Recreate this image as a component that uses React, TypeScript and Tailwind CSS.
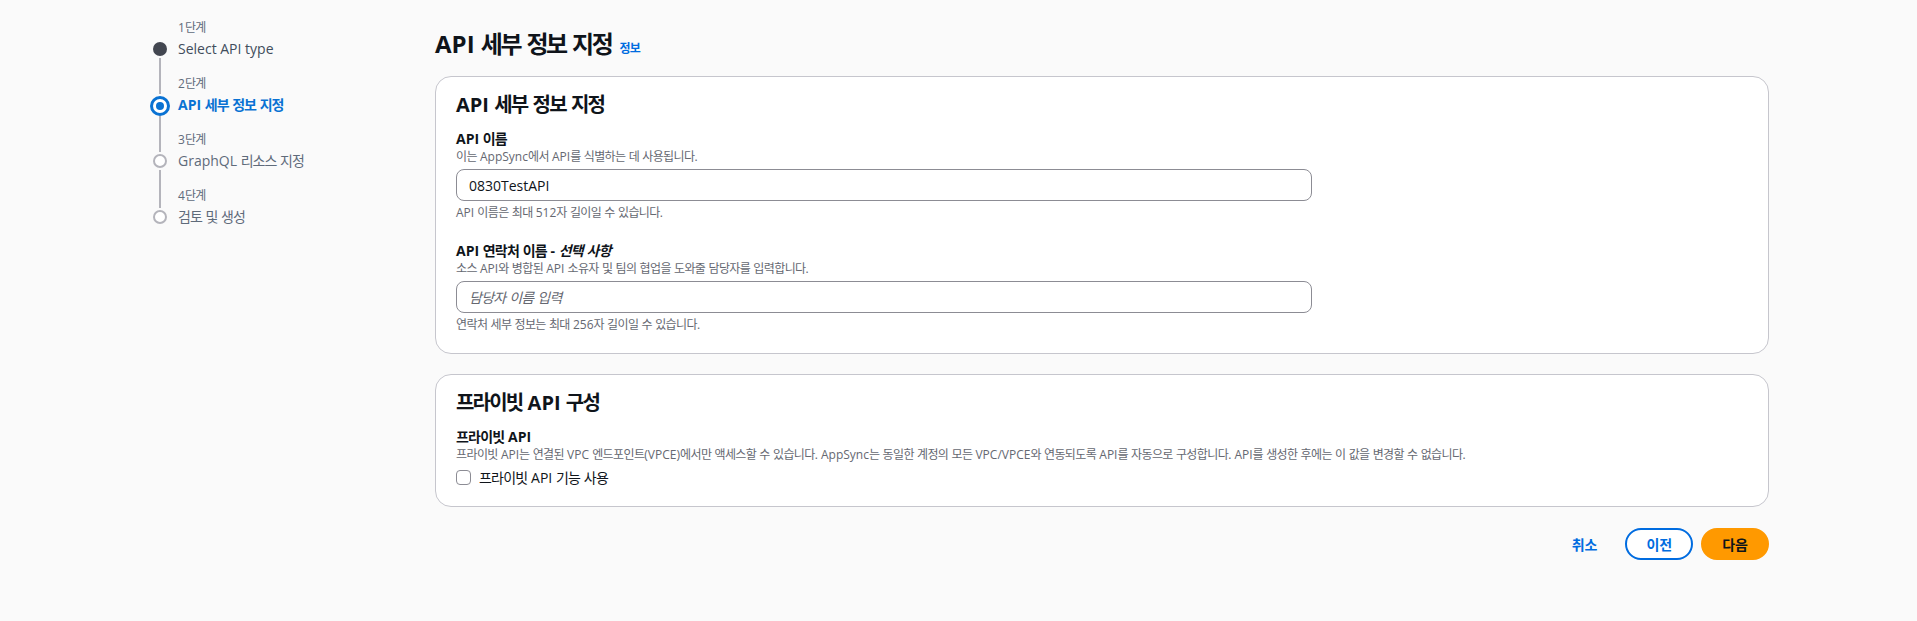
import React from "react";

// Hangul in the screenshot runs a little narrower than Noto Sans CJK, so tighten just those runs
function Ko({ t, tr }: { t: string; tr: string }) {
  const parts = t.split(/([\uac00-\ud7a3]+)/);
  return (
    <>
      {parts.map((p, i) =>
        /[\uac00-\ud7a3]/.test(p) ? (
          <span key={i} className={tr}>
            {p}
          </span>
        ) : (
          <React.Fragment key={i}>{p}</React.Fragment>
        )
      )}
    </>
  );
}

const steps = [
  { label: "1단계", title: "Select API type", state: "done" },
  { label: "2단계", title: "API 세부 정보 지정", state: "active" },
  { label: "3단계", title: "GraphQL 리소스 지정", state: "todo" },
  { label: "4단계", title: "검토 및 생성", state: "todo" },
];

function StepDot({ state }: { state: string }) {
  if (state === "active") {
    return (
      <div className="w-5 h-5 rounded-full border-[3px] border-[#0972d3] bg-white flex items-center justify-center shrink-0">
        <div className="w-2 h-2 rounded-full bg-[#0972d3]" />
      </div>
    );
  }
  if (state === "done") {
    return <div className="w-[14px] h-[14px] rounded-full bg-[#424650] shrink-0" />;
  }
  return <div className="w-[14px] h-[14px] rounded-full border-2 border-[#b4b4bb] bg-white shrink-0" />;
}

function Sidebar() {
  return (
    <nav className="w-[435px] shrink-0 pl-[150px] pt-[18px]">
      {steps.map((s, i) => {
        const first = i === 0;
        const last = i === steps.length - 1;
        return (
          <div key={s.label} className="grid grid-cols-[20px_1fr] gap-x-2">
            <div className="flex justify-center">
              {!first && <div className="w-[2px] h-full bg-[#b4b4bb]" />}
            </div>
            <div className="text-[12px] leading-[20px] text-[#5f6b7a]">
              <Ko t={s.label} tr="tracking-[-0.05em]" />
            </div>

            <div className="flex flex-col items-center h-[22px]">
              <div className={`w-[2px] flex-1 mb-[2px] ${first ? "" : "bg-[#b4b4bb]"}`} />
              <StepDot state={s.state} />
              <div className={`w-[2px] flex-1 mt-[2px] ${last ? "" : "bg-[#b4b4bb]"}`} />
            </div>
            <div
              className={
                s.state === "active"
                  ? "text-[14px] leading-[22px] font-bold text-[#0972d3]"
                  : s.state === "done"
                  ? "text-[14px] leading-[22px] text-[#414d5c]"
                  : "text-[14px] leading-[22px] text-[#5f6b7a]"
              }
            >
              <Ko t={s.title} tr="tracking-[-0.07em]" />
            </div>

            <div className="flex justify-center h-[14px]">
              {!last && <div className="w-[2px] h-full bg-[#b4b4bb]" />}
            </div>
            <div />
          </div>
        );
      })}
    </nav>
  );
}

function Field({
  label,
  optional,
  desc,
  value,
  placeholder,
  hint,
}: {
  label: string;
  optional?: string;
  desc: string;
  value?: string;
  placeholder?: string;
  hint: string;
}) {
  return (
    <div>
      <div className="text-[14px] leading-[20px] font-bold text-[#0f141a]">
        <Ko t={label} tr="tracking-[-0.055em]" />
        {optional && (
          <>
            {" - "}
            <span className="italic">
              <Ko t={optional} tr="tracking-[-0.055em]" />
            </span>
          </>
        )}
      </div>
      <div className="text-[12px] leading-[16px] text-[#656871]">
        <Ko t={desc} tr="tracking-[-0.05em]" />
      </div>
      <div className="mt-1 w-[856px] h-[32px] rounded-lg border border-[#8c8c94] bg-white flex items-center px-3 text-[14px]">
        {value ? (
          <span className="text-[#0f141a]">{value}</span>
        ) : (
          <span className="italic text-[#656871]">
            <Ko t={placeholder ?? ""} tr="tracking-[-0.05em]" />
          </span>
        )}
      </div>
      <div className="mt-1 text-[12px] leading-[16px] text-[#656871]">
        <Ko t={hint} tr="tracking-[-0.05em]" />
      </div>
    </div>
  );
}

export default function App() {
  return (
    <div
      className="min-h-[621px] bg-[#fafafa] flex text-[#0f141a]"
      style={{ fontFamily: '"Open Sans", "Noto Sans CJK KR", sans-serif' }}
    >
      <Sidebar />
      <main className="w-[1334px] shrink-0 pt-[29px]">
        <div className="flex items-baseline">
          <h1 className="text-[24px] leading-[30px] font-bold">
            <Ko t="API 세부 정보 지정" tr="tracking-[-0.1em]" />
          </h1>
          <span className="ml-[8px] text-[12px] font-bold text-[#006ce0]">
            <Ko t="정보" tr="tracking-[-0.05em]" />
          </span>
        </div>

        <section className="mt-[17px] rounded-2xl border border-[#c6c6cd] bg-white px-5 pt-4 pb-5">
          <h2 className="text-[20px] leading-[24px] font-bold">
            <Ko t="API 세부 정보 지정" tr="tracking-[-0.09em]" />
          </h2>
          <div className="mt-3 flex flex-col gap-5">
            <Field
              label="API 이름"
              desc="이는 AppSync에서 API를 식별하는 데 사용됩니다."
              value="0830TestAPI"
              hint="API 이름은 최대 512자 길이일 수 있습니다."
            />
            <Field
              label="API 연락처 이름"
              optional="선택 사항"
              desc="소스 API와 병합된 API 소유자 및 팀의 협업을 도와줄 담당자를 입력합니다."
              placeholder="담당자 이름 입력"
              hint="연락처 세부 정보는 최대 256자 길이일 수 있습니다."
            />
          </div>
        </section>

        <section className="mt-5 rounded-2xl border border-[#c6c6cd] bg-white px-5 pt-4 pb-[17px]">
          <h2 className="text-[20px] leading-[24px] font-bold">
            <Ko t="프라이빗 API 구성" tr="tracking-[-0.09em]" />
          </h2>
          <div className="mt-3">
            <div className="text-[14px] leading-[20px] font-bold">
              <Ko t="프라이빗 API" tr="tracking-[-0.055em]" />
            </div>
            <div className="text-[12px] leading-[16px] text-[#656871]">
              <Ko
                t="프라이빗 API는 연결된 VPC 엔드포인트(VPCE)에서만 액세스할 수 있습니다. AppSync는 동일한 계정의 모든 VPC/VPCE와 연동되도록 API를 자동으로 구성합니다. API를 생성한 후에는 이 값을 변경할 수 없습니다."
                tr="tracking-[-0.05em]"
              />
            </div>
            <label className="mt-[2px] h-6 flex items-center gap-2 text-[14px]">
              <span className="w-[15px] h-[15px] rounded-[4px] border-[1.5px] border-[#8c8c94] bg-white" />
              <span>
                <Ko t="프라이빗 API 기능 사용" tr="tracking-[-0.055em]" />
              </span>
            </label>
          </div>
        </section>

        <div className="mt-[21px] flex justify-end items-center gap-2">
          <button className="h-8 px-5 text-[14px] font-bold text-[#006ce0]">취소</button>
          <button className="h-8 px-[19px] rounded-full border-2 border-[#006ce0] bg-white text-[14px] font-bold text-[#006ce0]">
            이전
          </button>
          <button className="h-8 px-[19px] rounded-full border-2 border-[#ff9900] bg-[#ff9900] text-[14px] font-bold text-[#0f141a]">
            다음
          </button>
        </div>
      </main>
    </div>
  );
}
